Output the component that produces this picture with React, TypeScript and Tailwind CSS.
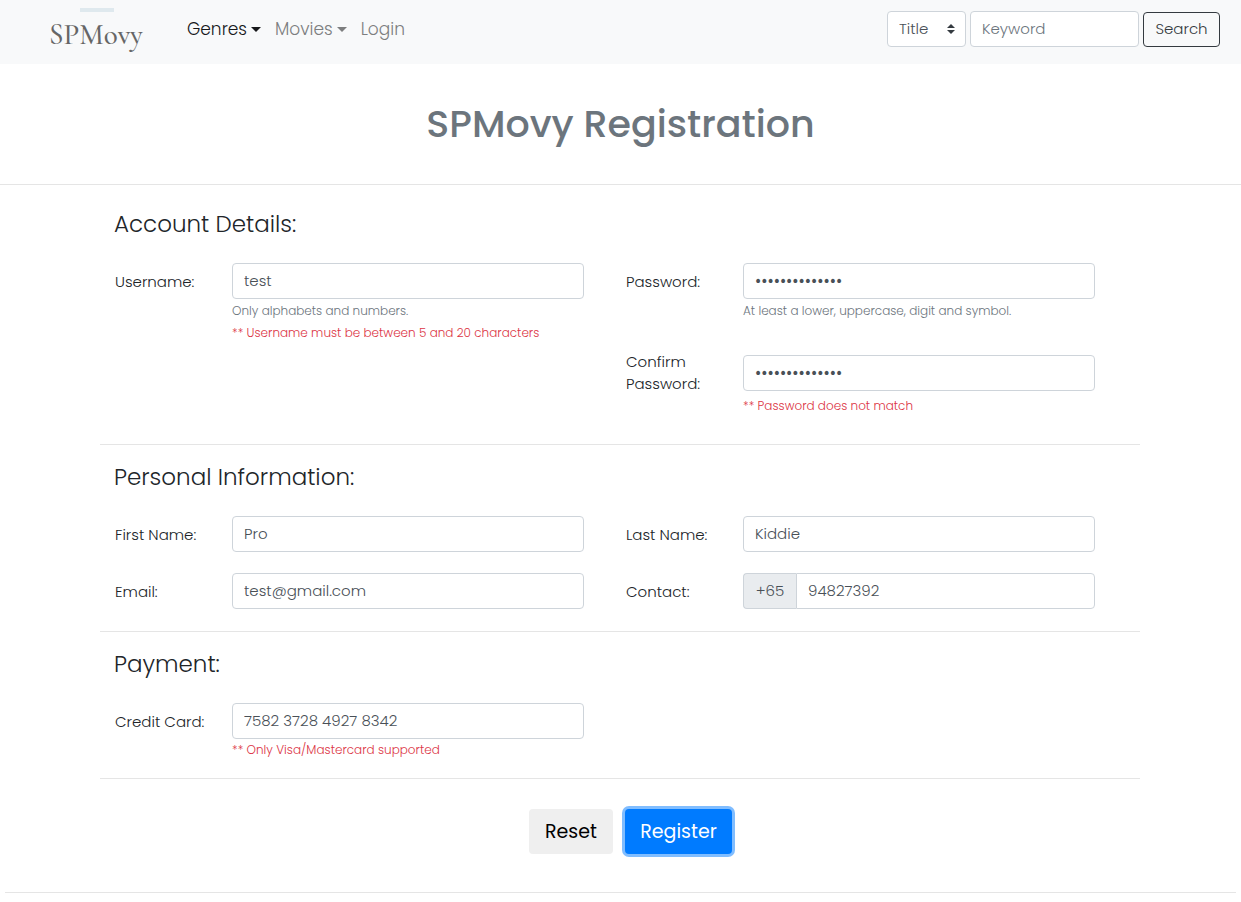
import React from "react";

const control =
  "h-9 w-full min-w-0 rounded border border-[#ced4da] bg-white px-[11px] font-light text-[#495057] outline-none placeholder:text-[#6c757d]";

function Caret() {
  return (
    <svg viewBox="0 0 10 5" className="h-[5px] w-[10px]" fill="currentColor" aria-hidden="true">
      <path d="M0 0h10L5 5z" />
    </svg>
  );
}

type FieldProps = {
  id: string;
  label: string;
  value: string;
  type?: string;
  hint?: string;
  error?: string;
  prefix?: string;
};

function Field({ id, label, value, type = "text", hint, error, prefix }: FieldProps) {
  const size = type === "password" ? " text-[17px]" : " pb-[2px] text-[15px]";
  return (
    <div className={hint || error ? "" : "pb-[5px]"}>
      <div className="flex items-center">
        <label htmlFor={id} className="w-[118px] shrink-0 pt-px pr-6 pl-px text-[15px] leading-[22px]">
          {label}
        </label>
        <div className="flex min-w-0 flex-1">
          {prefix && (
            <span className="flex h-9 w-[53px] shrink-0 items-center justify-center rounded-l border border-r-0 border-[#ced4da] bg-[#e9ecef] text-[15px] text-[#495057]">
              {prefix}
            </span>
          )}
          <input
            id={id}
            type={type}
            defaultValue={value}
            className={control + size + (prefix ? " rounded-l-none" : "")}
          />
        </div>
      </div>
      <div className="ml-[118px] text-xs leading-[22px]">
        {hint && <p className="pt-px text-[#6c757d]">{hint}</p>}
        {error && <p className="text-[#dc3545]">{error}</p>}
      </div>
    </div>
  );
}

function Section({ title, children }: { title: string; children: React.ReactNode }) {
  return (
    <section className="border-b border-[#e5e5e5] pt-[18px] pr-[45px] pb-[17px] pl-[14px]">
      <h2 className="mb-[25px] text-[23px] leading-7">{title}</h2>
      <div className="grid grid-cols-2 gap-x-[41px] gap-y-4">{children}</div>
    </section>
  );
}

export default function App() {
  return (
    <div className="bg-white font-[Poppins,Inter,sans-serif] font-light text-[#212529]">
      <nav className="flex h-16 items-center justify-between bg-[#f8f9fa] pr-[21px] pl-[49px]">
        <div className="flex items-center">
          <a
            href="#home"
            className="flex h-16 w-[138px] flex-col pt-2 font-['Cormorant_Garamond','Cormorant','EB_Garamond','Liberation_Serif',serif] text-[29px] leading-[30px] font-medium text-[#666]"
          >
            <span className="mb-2 ml-[31px] h-1 w-[34px] bg-[#dfe9ee]" />
            SPMovy
          </a>
          <div className="flex items-center gap-[14px] pb-[5px] text-[17px] text-[#7d7e7f]">
            <button type="button" className="flex items-center gap-1 text-[#17181a]">
              Genres <Caret />
            </button>
            <button type="button" className="flex items-center gap-1">
              Movies <Caret />
            </button>
            <a href="#login">Login</a>
          </div>
        </div>
        <form className="flex items-center gap-1 pb-[6px]">
          <div className="relative w-[79px]">
            <select aria-label="Search by" className={control + " appearance-none text-[15px]"}>
              <option>Title</option>
            </select>
            <svg
              viewBox="0 0 4 5"
              className="pointer-events-none absolute top-[13px] right-[11px] h-[10px] w-2"
              fill="#343a40"
              aria-hidden="true"
            >
              <path d="M2 0L0 2h4zm0 5L0 3h4z" />
            </svg>
          </div>
          <input
            aria-label="Keyword"
            placeholder="Keyword"
            className={control + " max-w-[169px] pb-[2px] text-[15px]"}
          />
          <button
            type="button"
            className="h-[35px] w-[77px] shrink-0 rounded border border-[#343a40] text-[15px] text-[#343a40]"
          >
            Search
          </button>
        </form>
      </nav>

      <header className="border-b border-[#e5e5e5] pt-9 pb-9">
        <h1 className="text-center text-[38px] leading-[48px] font-medium text-[#6c757d]">
          SPMovy Registration
        </h1>
      </header>

      <form>
        <div className="mx-auto max-w-[1041px] pt-[7px] pr-px">
          <Section title="Account Details:">
            <Field
              id="username"
              label="Username:"
              value="test"
              hint="Only alphabets and numbers."
              error="** Username must be between 5 and 20 characters"
            />
            <div className="flex flex-col gap-7 pb-[10px]">
              <Field
                id="password"
                label="Password:"
                type="password"
                value="Passw0rd!Passw"
                hint="At least a lower, uppercase, digit and symbol."
              />
              <Field
                id="confirm"
                label="Confirm Password:"
                type="password"
                value="Passw0rd!Passx"
                error="** Password does not match"
              />
            </div>
          </Section>
          <Section title="Personal Information:">
            <Field id="first" label="First Name:" value="Pro" />
            <Field id="last" label="Last Name:" value="Kiddie" />
            <Field id="email" label="Email:" type="email" value="test@gmail.com" />
            <Field id="contact" label="Contact:" type="tel" value="94827392" prefix="+65" />
          </Section>
          <Section title="Payment:">
            <Field
              id="card"
              label="Credit Card:"
              value="7582 3728 4927 8342"
              error="** Only Visa/Mastercard supported"
            />
          </Section>
        </div>
        <div className="mx-[5px] flex justify-center gap-3 border-b border-[#e5e5e5] pt-[30px] pb-[38px] pl-5 text-[19px]">
          <button type="reset" className="h-[45px] w-[84px] rounded bg-[#efefef] pt-[2px] font-normal text-black">
            Reset
          </button>
          <button
            type="button"
            className="h-[45px] w-[107px] rounded bg-[#007bff] pt-[2px] font-normal text-white ring-3 ring-[#80bdff]"
          >
            Register
          </button>
        </div>
      </form>
    </div>
  );
}
